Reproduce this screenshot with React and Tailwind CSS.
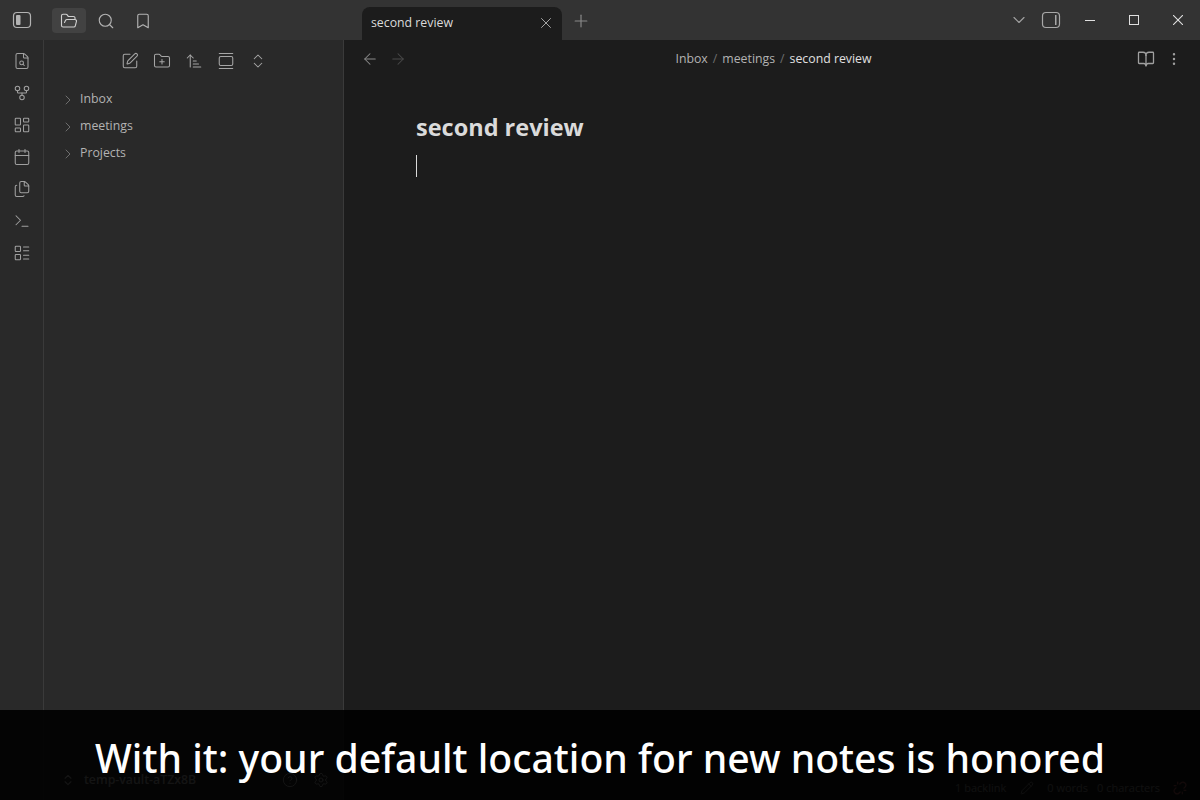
import {
  ArrowLeft,
  ArrowRight,
  ArrowUpNarrowWide,
  Bookmark,
  BookOpen,
  Calendar,
  ChevronDown,
  ChevronRight,
  ChevronsUpDown,
  CircleHelp,
  EllipsisVertical,
  FileSearch,
  Files,
  FolderOpen,
  FolderPlus,
  GalleryVertical,
  GitFork,
  LayoutDashboard,
  LayoutList,
  Pencil,
  Plus,
  Search,
  Settings,
  SquarePen,
  Terminal,
  Unlink,
  X,
} from "lucide-react";

const SidebarIcon = ({ side }) => (
  <svg width="20" height="20" viewBox="0 0 20 20" fill="none">
    <rect x="1.5" y="2.5" width="17" height="15" rx="3.5" stroke="currentColor" strokeWidth="1.2" />
    {side === "left" ? (
      <rect x="4" y="5" width="4.5" height="10" rx="1" fill="currentColor" />
    ) : (
      <rect x="14" y="5" width="1.5" height="10" fill="currentColor" />
    )}
  </svg>
);

// windows caption buttons, thin and square
const WinMinimize = () => (
  <svg width="10" height="10" viewBox="0 0 10 10" fill="none">
    <rect x="0" y="5" width="10" height="1" fill="currentColor" />
  </svg>
);
const WinMaximize = () => (
  <svg width="10" height="10" viewBox="0 0 10 10" fill="none">
    <rect x="0.5" y="0.5" width="9" height="9" stroke="currentColor" />
  </svg>
);
const WinClose = () => (
  <svg width="10" height="10" viewBox="0 0 10 10" fill="none">
    <path d="M0 0L10 10M10 0L0 10" stroke="currentColor" strokeWidth="1.1" />
  </svg>
);

const railIcons = [FileSearch, GitFork, LayoutDashboard, Calendar, Files, Terminal, LayoutList];
const treeItems = ["Inbox", "meetings", "Projects"];
const fileActions = [SquarePen, FolderPlus, ArrowUpNarrowWide, GalleryVertical, ChevronsUpDown];

export default function App() {
  return (
    <div className="relative flex h-[800px] w-[1200px] flex-col overflow-hidden bg-[#1c1c1c] font-['Open_Sans',sans-serif] text-[12.3px] text-[#b3b3b3]">
      {/* title bar */}
      <div className="flex h-10 items-stretch bg-[#333333]">
        <div className="flex w-[52px] items-center pl-3 text-[#b3b3b3]">
          <SidebarIcon side="left" />
        </div>
        <div className="flex w-[310px] items-center gap-[3px] pt-px">
          <div className="flex h-[25px] w-[34px] items-center justify-center rounded bg-[#424242] text-[#d0d0d0]">
            <FolderOpen size={18} strokeWidth={1.5} />
          </div>
          <div className="flex h-[25px] w-[34px] items-center justify-center">
            <Search size={18} strokeWidth={1.5} />
          </div>
          <div className="flex h-[25px] w-[34px] items-center justify-center">
            <Bookmark size={18} strokeWidth={1.5} />
          </div>
        </div>
        <div className="mt-[7px] flex w-[200px] items-center justify-between rounded-t-lg bg-[#1c1c1c] pb-0.5 pl-[9px] pr-[7px] text-[#dadada]">
          <span className="pt-0.5">second review</span>
          <X size={18} strokeWidth={1.3} className="text-[#a8a8a8]" />
        </div>
        <div className="ml-[9px] flex items-center pt-0.5 text-[#8a8a8a]">
          <Plus size={20} strokeWidth={1.4} />
        </div>
        <div className="flex flex-1 items-center justify-end">
          <ChevronDown size={20} strokeWidth={1.4} className="mr-[12px] text-[#a0a0a0]" />
          <span className="mr-[7px] flex text-[#a8a8a8]">
            <SidebarIcon side="right" />
          </span>
          <div className="flex w-[132px] items-center text-[#e0e0e0]">
            <span className="flex w-11 justify-center"><WinMinimize /></span>
            <span className="flex w-11 justify-center"><WinMaximize /></span>
            <span className="flex w-11 justify-center"><WinClose /></span>
          </div>
        </div>
      </div>

      <div className="flex min-h-0 flex-1">
        {/* left rail */}
        <div className="flex w-11 flex-col items-center gap-[14px] border-r border-[#3a3a3a] bg-[#292929] pt-[12px] text-[#a0a0a0]">
          {railIcons.map((Icon, i) => (
            <Icon key={i} size={18} strokeWidth={1.4} />
          ))}
        </div>

        {/* file explorer */}
        <div className="flex w-[300px] flex-col border-r border-[#3a3a3a] bg-[#292929]">
          <div className="flex h-[41px] items-center justify-center gap-[14px] pl-px text-[#a6a6a6]">
            {fileActions.map((Icon, i) => (
              <Icon key={i} size={18} strokeWidth={1.4} />
            ))}
          </div>
          <div className="flex flex-1 flex-col px-4 pt-[5px]">
            {treeItems.map((item) => (
              <div key={item} className="flex h-[27px] items-center gap-1">
                <ChevronRight size={16} strokeWidth={1.5} className="text-[#6e6e6e]" />
                <span>{item}</span>
              </div>
            ))}
          </div>
          <div className="flex h-10 items-center pl-[17px] text-[#c8c8c8]">
            <ChevronsUpDown size={14} />
            <span className="ml-[9px] w-[198px] font-semibold">temp-vault-aTZx8B</span>
            <CircleHelp size={16} strokeWidth={1.5} />
            <Settings size={16} strokeWidth={1.5} className="ml-[15px]" />
          </div>
        </div>

        {/* editor */}
        <div className="flex flex-1 flex-col">
          <div className="flex h-[38px] items-center justify-between pl-[17px] pr-[18px]">
            <div className="flex items-center gap-[10px]">
              <ArrowLeft size={18} strokeWidth={1.4} className="text-[#8a8a8a]" />
              <ArrowRight size={18} strokeWidth={1.4} className="text-[#4a4a4a]" />
            </div>
            <div className="flex items-center gap-[5px] pl-[3px]">
              <span>Inbox</span>
              <span className="text-[#6e6e6e]">/</span>
              <span>meetings</span>
              <span className="text-[#6e6e6e]">/</span>
              <span className="text-[#e0e0e0]">second review</span>
            </div>
            <div className="flex items-center gap-[11px] text-[#a0a0a0]">
              <BookOpen size={18} strokeWidth={1.7} />
              <EllipsisVertical size={16} strokeWidth={1.7} />
            </div>
          </div>
          <div className="flex-1 px-[72px] pt-[31px]">
            <h1 className="text-[23.5px] leading-[36px] font-bold text-[#dadada]">second review</h1>
            <div className="mt-[10px] h-[22px] w-px bg-[#dadada]" />
          </div>
          <div className="flex h-6 items-center justify-end pr-[13px] text-[11px] text-[#a0a0a0]">
            <span>1 backlink</span>
            <Pencil size={14} strokeWidth={1.5} className="ml-[14px]" />
            <span className="ml-[13px]">0 words</span>
            <span className="ml-[9px]">0 characters</span>
            <Unlink size={14} className="ml-[13px] text-[#c06060]" />
          </div>
        </div>
      </div>

      {/* caption over the window */}
      <div className="absolute inset-x-0 bottom-0 flex h-[90px] justify-center bg-black/90 pt-[17px]">
        <p className="font-['Noto_Sans',sans-serif] text-[39.15px] leading-[62px] font-medium text-white">With it: your default location for new notes is honored</p>
      </div>
    </div>
  );
}
